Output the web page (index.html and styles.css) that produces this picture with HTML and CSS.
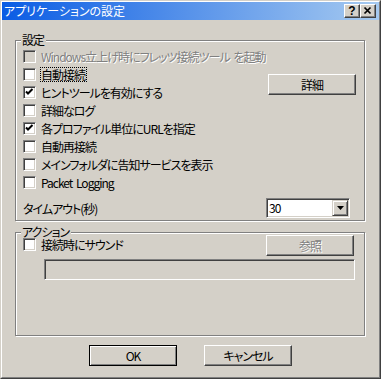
FILE: index.html
```html
<!DOCTYPE html>
<html lang="ja">
<head>
<meta charset="utf-8">
<title>アプリケーションの設定</title>
<link rel="stylesheet" href="styles.css">
</head>
<body>
<div class="window">
  <div class="frame">
    <div class="titlebar">
      <span class="title">アプリケーションの設定</span>
      <div class="tbtns">
        <span class="tbtn help">?</span>
        <span class="tbtn close"><svg width="14" height="12" viewBox="0 0 14 12"><path d="M3.5 2.5 L9.5 8.5 M9.5 2.5 L3.5 8.5" stroke="#000" stroke-width="1.7" fill="none"/></svg></span>
      </div>
    </div>
    <div class="content">
      <div class="group g1">
        <div class="gtitle">設定</div>
        <div class="grid">
          <div class="chk disabled"><span class="box"></span><span class="lbl">Windows立上げ時にフレッツ接続ツール を起動</span></div>
          <div class="chk"><span class="box"></span><span class="lbl focus">自動接続</span></div>
          <div class="btn detail">詳細</div>
          <div class="chk"><span class="box checked"><svg width="9" height="9" viewBox="0 0 9 9"><path d="M1 3.5 L3 5.5 L7.5 1" stroke="#000" stroke-width="2" fill="none"/></svg></span><span class="lbl">ヒントツールを有効にする</span></div>
          <div class="chk"><span class="box"></span><span class="lbl">詳細なログ</span></div>
          <div class="chk"><span class="box checked"><svg width="9" height="9" viewBox="0 0 9 9"><path d="M1 3.5 L3 5.5 L7.5 1" stroke="#000" stroke-width="2" fill="none"/></svg></span><span class="lbl">各プロファイル単位にURLを指定</span></div>
          <div class="chk"><span class="box"></span><span class="lbl">自動再接続</span></div>
          <div class="chk"><span class="box"></span><span class="lbl">メインフォルダに告知サービスを表示</span></div>
          <div class="chk"><span class="box"></span><span class="lbl">Packet Logging</span></div>
        </div>
        <div class="timeout">
          <span class="tlabel">タイムアウト(秒)</span>
          <div class="select">
            <span class="sval">30</span>
            <span class="sbtn"><svg width="7" height="4" viewBox="0 0 7 4"><path d="M0 0 H7 L3.5 4 Z" fill="#000"/></svg></span>
          </div>
        </div>
      </div>
      <div class="group g2">
        <div class="gtitle">アクション</div>
        <div class="arow">
          <div class="chk"><span class="box"></span><span class="lbl">接続時にサウンド</span></div>
          <div class="btn ref disabled">参照</div>
        </div>
        <div class="field"></div>
      </div>
      <div class="actions">
        <div class="btn default">OK</div>
        <div class="btn">キャンセル</div>
      </div>
    </div>
  </div>
</div>
</body>
</html>
```

FILE: styles.css
```css
html, body {
  margin: 0;
  padding: 0;
}
body {
  font-family: "Noto Sans CJK JP", "Liberation Sans", sans-serif;
  font-size: 12px;
  font-feature-settings: "palt";
  letter-spacing: -1px;
  word-spacing: 2px;
  color: #000;
  background: #d4d0c8;
}
.window {
  width: 381px;
  height: 379px;
  box-sizing: border-box;
  border: 1px solid;
  border-color: #d4d0c8 #404040 #404040 #d4d0c8;
  background: #d4d0c8;
}
.frame {
  height: 100%;
  box-sizing: border-box;
  border: 1px solid;
  border-color: #fff #808080 #808080 #fff;
  display: flex;
  flex-direction: column;
}
.titlebar {
  height: 18px;
  flex: none;
  background: linear-gradient(to right, #0a5ce4, #a6caf0);
  display: flex;
  align-items: center;
  padding: 0 3px 0 2px;
  color: #fff;
  letter-spacing: 0;
  word-spacing: 0;
}
.title {
  flex: 1;
  line-height: 18px;
  white-space: nowrap;
}
.tbtns {
  display: flex;
}
.tbtn {
  width: 16px;
  height: 14px;
  box-sizing: border-box;
  background: #d4d0c8;
  border: 1px solid;
  border-color: #fff #404040 #404040 #fff;
  box-shadow: inset -1px -1px #808080;
  display: flex;
  align-items: center;
  justify-content: center;
  color: #000;
}
.help {
  font-family: "Liberation Sans", sans-serif;
  font-weight: bold;
  font-size: 12px;
  line-height: 12px;
}
.content {
  flex: 1;
  padding-left: 13px;
}
.group {
  width: 350px;
  box-sizing: border-box;
  border: 1px solid #808080;
  box-shadow: inset 1px 1px #fff, 1px 1px #fff;
  padding-left: 7px;
}
.g1 {
  margin-top: 20px;
  padding-bottom: 2px;
}
.g2 {
  margin-top: 11px;
  height: 104px;
}
.gtitle {
  display: block;
  width: max-content;
  height: 14px;
  line-height: 14px;
  margin-top: -8px;
  margin-left: -2px;
  padding: 0 2px 0 1px;
  background: #d4d0c8;
}
.g1 .gtitle {
  margin-bottom: 1px;
}
.g2 .gtitle {
  height: 12px;
  line-height: 12px;
  margin-top: -7px;
  margin-bottom: -3px;
}
.grid {
  display: grid;
  grid-template-columns: minmax(0, 1fr) auto;
  grid-auto-rows: 18px;
}
.grid .chk {
  grid-column: 1;
}
.detail {
  grid-column: 2;
  grid-row: 2 / 4;
  align-self: center;
  margin-right: 8px;
}
.chk {
  display: flex;
  align-items: flex-start;
  height: 18px;
  white-space: nowrap;
}
.box {
  width: 13px;
  height: 13px;
  flex: none;
  box-sizing: border-box;
  margin-top: 2px;
  margin-right: 4px;
  background: #fff;
  border: 1px solid;
  border-color: #808080 #fff #fff #808080;
  box-shadow: inset 1px 1px #404040, inset -1px -1px #d4d0c8;
  display: flex;
  align-items: center;
  justify-content: center;
}
.lbl {
  line-height: 13px;
  margin-top: 2px;
  padding: 0 2px 0 1px;
}
.focus {
  outline: 1px dotted #000;
  outline-offset: -1px;
  line-height: 15px;
  margin-top: 1px;
}
.chk.disabled .box {
  background: #d4d0c8;
}
.disabled .lbl, .btn.disabled {
  color: #808080;
  text-shadow: 1px 1px 0 #fff;
}
.btn {
  width: 88px;
  height: 21px;
  box-sizing: border-box;
  background: #d4d0c8;
  border: 1px solid;
  border-color: #fff #404040 #404040 #fff;
  box-shadow: inset -1px -1px #808080;
  display: flex;
  align-items: center;
  justify-content: center;
  white-space: nowrap;
}
.btn.default {
  border-color: #000;
  box-shadow: inset 1px 1px #fff, inset -1px -1px #808080;
}
.timeout {
  margin-top: 6px;
  display: flex;
  justify-content: space-between;
  align-items: center;
  height: 20px;
}
.select {
  width: 84px;
  height: 20px;
  box-sizing: border-box;
  margin-right: 14px;
  background: #fff;
  border: 1px solid;
  border-color: #808080 #fff #fff #808080;
  box-shadow: inset 1px 1px #404040, inset -1px -1px #d4d0c8;
  display: flex;
  padding: 1px;
}
.sval {
  flex: 1;
  padding-left: 1px;
  line-height: 16px;
}
.sbtn {
  width: 16px;
  height: 16px;
  box-sizing: border-box;
  background: #d4d0c8;
  border: 1px solid;
  border-color: #d4d0c8 #404040 #404040 #d4d0c8;
  box-shadow: inset 1px 1px #fff, inset -1px -1px #808080;
  display: flex;
  align-items: center;
  justify-content: center;
}
.arow {
  display: flex;
  justify-content: space-between;
  align-items: flex-start;
  height: 21px;
}
.arow .chk {
  margin-top: 1px;
}
.ref {
  margin-right: 10px;
}
.field {
  margin-top: 3px;
  margin-left: 21px;
  width: 311px;
  height: 21px;
  box-sizing: border-box;
  border: 1px solid;
  border-color: #808080 #fff #fff #808080;
  box-shadow: inset 1px 1px #404040, inset -1px -1px #d4d0c8;
  background: #d4d0c8;
}
.actions {
  margin-top: 9px;
  margin-left: -13px;
  display: flex;
  justify-content: center;
  gap: 27px;
}
```
